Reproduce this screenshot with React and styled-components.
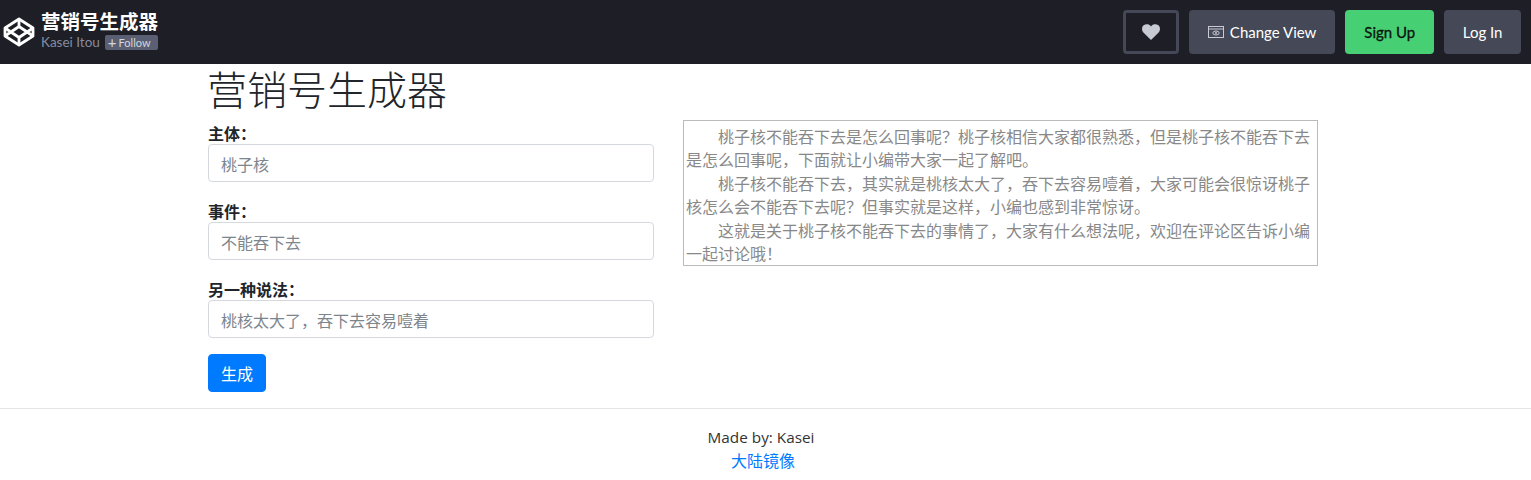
import React from "react";
import styled, { createGlobalStyle } from "styled-components";

const cjk = `"Noto Sans CJK SC", sans-serif`;

const GlobalStyle = createGlobalStyle`
    * {
        box-sizing: border-box;
    }
    body {
        margin: 0;
        background: #fff;
        color: #212529;
        font-family: "Open Sans", ${cjk};
        font-size: 16px;
        line-height: 24px;
    }
`;

const Bar = styled.header`
    height: 64px;
    background: #1e1f26;
    display: flex;
    align-items: center;
    justify-content: space-between;
    padding: 0 10px 0 3px;
`;

const Brand = styled.div`
    display: flex;
    align-items: center;
    gap: 6px;
`;

const BrandText = styled.div`
    display: flex;
    flex-direction: column;
    gap: 3px;
    padding-bottom: 5px;
`;

const BrandTitle = styled.div`
    color: #fff;
    font-family: ${cjk};
    font-weight: 700;
    font-size: 19.5px;
    line-height: 22px;
`;

const Author = styled.div`
    display: flex;
    align-items: center;
    gap: 5px;
    color: #868ca0;
    font-family: Lato, sans-serif;
    font-size: 13.5px;
    line-height: 15px;
`;

const FollowTag = styled.span`
    display: inline-flex;
    align-items: center;
    gap: 2px;
    width: 53px;
    height: 15px;
    padding-left: 3px;
    background: #5a5f73;
    color: #d5d7de;
    font-size: 11px;
    border-radius: 2px;
`;

const Plus = styled.span`
    font-size: 15px;
    line-height: 15px;
`;

const Actions = styled.div`
    display: flex;
    align-items: center;
    gap: 10px;
`;

const HeaderButton = styled.div`
    height: 44px;
    padding: 0 ${(p) => p.$pad}px;
    display: flex;
    align-items: center;
    gap: 6px;
    border-radius: 4px;
    background: ${(p) => (p.$green ? "#47cf73" : "#444857")};
    color: ${(p) => (p.$green ? "#0b140e" : "#fff")};
    font-family: Lato, sans-serif;
    font-size: 15px;
    -webkit-text-stroke: ${(p) => (p.$green ? "0.3px" : "0")};
`;

const HeartButton = styled.div`
    width: 56px;
    height: 44px;
    display: flex;
    align-items: center;
    justify-content: center;
    border: 3px solid #444857;
    border-radius: 4px;
    color: #c7c9d3;
`;

const Main = styled.main`
    width: 1110px;
    margin-left: 208px;
    height: 344px;
`;

const Title = styled.h1`
    margin: 0 0 8px -1px;
    font-family: ${cjk};
    font-weight: 300;
    font-size: 40px;
    line-height: 48px;
    color: #212529;
`;

const Columns = styled.div`
    display: grid;
    grid-template-columns: 446px 635px;
    column-gap: 29px;
    align-items: start;
`;

const Field = styled.div`
    margin-bottom: 16px;
`;

const Label = styled.label`
    display: block;
    height: 24px;
    font-family: ${cjk};
    font-weight: 700;
    font-size: 16px;
    line-height: 26px;
`;

const Input = styled.input`
    display: block;
    width: 100%;
    height: 38px;
    padding: 1px 12px 0;
    border: 1px solid #d5d9dd;
    border-radius: 4px;
    font-family: ${cjk};
    font-size: 16px;
    color: #495057;
    &::placeholder {
        color: #7d858c;
        opacity: 1;
    }
`;

const Submit = styled.button`
    display: block;
    height: 38px;
    padding: 0 12px;
    border: 1px solid #007bff;
    border-radius: 4px;
    background: #007bff;
    color: #fff;
    font-family: ${cjk};
    font-size: 16px;
`;

const Output = styled.div`
    border: 1px solid #bbb;
    padding: 3.5px 2px 0;
    color: #888;
    font-family: ${cjk};
    font-size: 16px;
    line-height: 23.6px;
    height: 146px;
`;

const Paragraph = styled.p`
    margin: 0;
    text-indent: 2em;
`;

const Footer = styled.footer`
    border-top: 1px solid #e5e5e5;
    padding-top: 16px;
    padding-right: 5px;
    text-align: center;
    font-size: 15.3px;
    color: #333;
`;

const Credit = styled.span`
    padding-right: 4px;
`;

const FooterLink = styled.a`
    display: block;
    margin-top: -1px;
    color: #007bff;
    font-family: ${cjk};
    font-size: 16px;
    text-decoration: none;
`;

const CodepenLogo = () => (
    <svg width="32" height="32" viewBox="0 0 32 32" fill="none" stroke="#fff" strokeWidth="2.8" strokeLinejoin="round">
        <path d="M16 3 L30 12 V20 L16 29 L2 20 V12 Z" />
        <path d="M16 3 V10.5 M16 21.5 V29 M2 12 L16 21.5 L30 12 M2 20 L16 10.5 L30 20" />
    </svg>
);

const Heart = () => (
    <svg width="18" height="16" viewBox="0 0 18 16" fill="currentColor">
        <path d="M9 16 L1.4 8.4 C-0.5 6.4 -0.4 3 1.6 1.3 C3.6 -0.4 6.6 -0.2 8.2 1.6 L9 2.5 L9.8 1.6 C11.4 -0.2 14.4 -0.4 16.4 1.3 C18.4 3 18.5 6.4 16.6 8.4 Z" />
    </svg>
);

const ViewIcon = () => (
    <svg width="16" height="12" viewBox="0 0 16 12" fill="none" stroke="#c7c9d3" strokeWidth="1">
        <rect x="0.5" y="0.5" width="15" height="11" />
        <path d="M0.5 3 H15.5" />
        <ellipse cx="8" cy="7" rx="3.2" ry="2" />
        <circle cx="8" cy="7" r="1" fill="#c7c9d3" stroke="none" />
    </svg>
);

const App = () => (
    <>
        <GlobalStyle />
        <Bar>
            <Brand>
                <CodepenLogo />
                <BrandText>
                    <BrandTitle>营销号生成器</BrandTitle>
                    <Author>
                        Kasei Itou
                        <FollowTag>
                            <Plus>+</Plus> Follow
                        </FollowTag>
                    </Author>
                </BrandText>
            </Brand>
            <Actions>
                <HeartButton>
                    <Heart />
                </HeartButton>
                <HeaderButton $pad={19}>
                    <ViewIcon />
                    Change View
                </HeaderButton>
                <HeaderButton $pad={19} $green>
                    Sign Up
                </HeaderButton>
                <HeaderButton $pad={18.5}>Log In</HeaderButton>
            </Actions>
        </Bar>
        <Main>
            <Title>营销号生成器</Title>
            <Columns>
                <div>
                    <Field>
                        <Label>主体：</Label>
                        <Input placeholder="桃子核" />
                    </Field>
                    <Field>
                        <Label>事件：</Label>
                        <Input placeholder="不能吞下去" />
                    </Field>
                    <Field>
                        <Label>另一种说法：</Label>
                        <Input placeholder="桃核太大了，吞下去容易噎着" />
                    </Field>
                    <Submit>生成</Submit>
                </div>
                <Output>
                    <Paragraph>桃子核不能吞下去是怎么回事呢？桃子核相信大家都很熟悉，但是桃子核不能吞下去是怎么回事呢，下面就让小编带大家一起了解吧。</Paragraph>
                    <Paragraph>桃子核不能吞下去，其实就是桃核太大了，吞下去容易噎着，大家可能会很惊讶桃子核怎么会不能吞下去呢？但事实就是这样，小编也感到非常惊讶。</Paragraph>
                    <Paragraph>这就是关于桃子核不能吞下去的事情了，大家有什么想法呢，欢迎在评论区告诉小编一起讨论哦！</Paragraph>
                </Output>
            </Columns>
        </Main>
        <Footer>
            <Credit>Made by: Kasei</Credit>
            <FooterLink href="#">大陆镜像</FooterLink>
        </Footer>
    </>
);

export default App;
